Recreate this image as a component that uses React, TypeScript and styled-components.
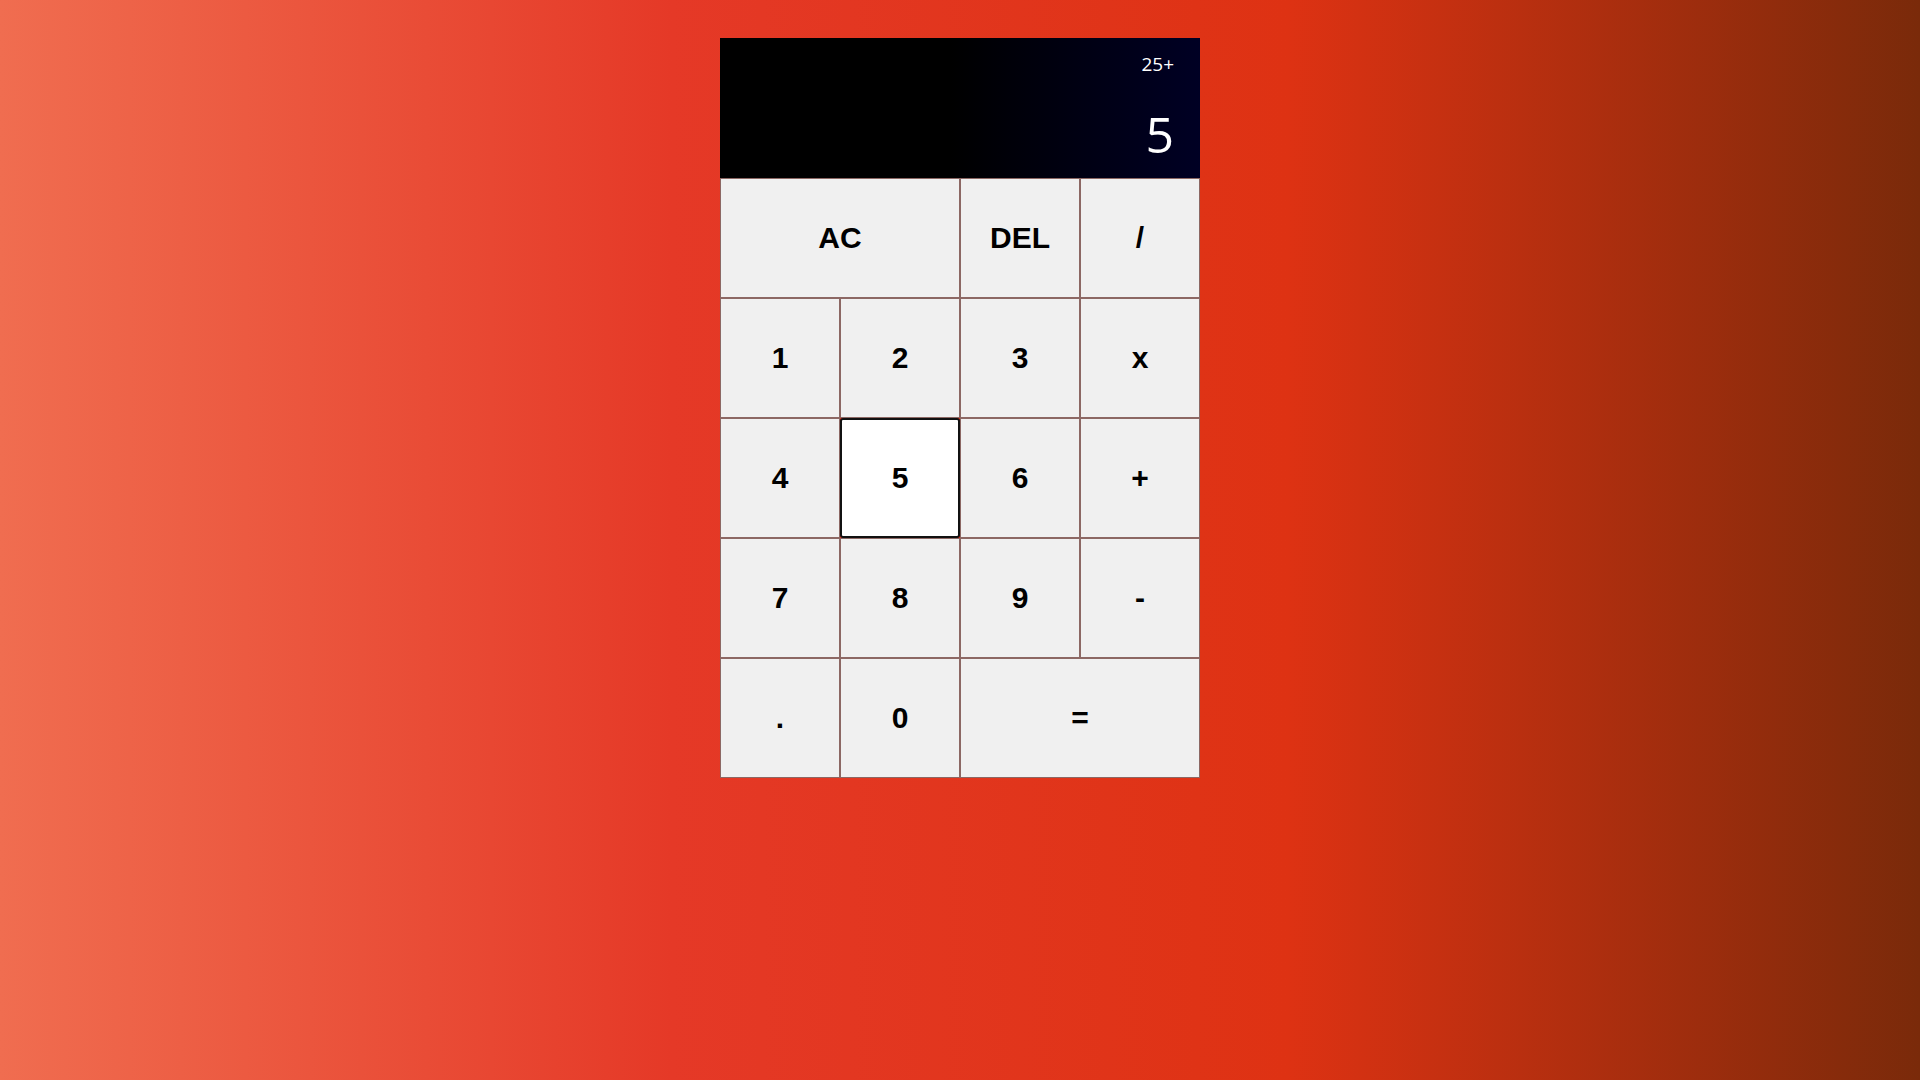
import React from "react";
import styled, { createGlobalStyle } from "styled-components";

const GlobalStyle = createGlobalStyle`
  *, *::before, *::after { box-sizing: border-box; }
  html, body { margin: 0; padding: 0; }
  body {
    min-height: 100vh;
    background: linear-gradient(to right, #f06d50 0%, #e53927 35%, #de3213 67%, #7a2a0a 100%);
    font-family: "Liberation Sans", Arial, sans-serif;
  }
`;

const Calculator = styled.div`
  display: grid;
  justify-content: center;
  grid-template-columns: repeat(4, 120px);
  grid-template-rows: 140px repeat(5, 120px);
  padding-top: 38px;
`;

const Display = styled.div`
  grid-column: 1 / -1;
  background: linear-gradient(to right, #000 48%, #000024 100%);
  display: flex;
  flex-direction: column;
  align-items: flex-end;
  justify-content: space-between;
  padding: 13px 26px 14px 24px;
  font-family: "Open Sans", "Noto Sans", sans-serif;
  color: #fff;
`;

const Previous = styled.div`
  font-size: 19px;
  line-height: 26px;
`;

const Current = styled.div`
  font-size: 50px;
  line-height: 60px;
`;

const Key = styled.button<{ $span?: number; $active?: boolean }>`
  grid-column: span ${(p) => p.$span ?? 1};
  margin: 0;
  padding: 0;
  font-family: "Liberation Sans", Arial, sans-serif;
  font-weight: bold;
  font-size: 30px;
  color: #000;
  cursor: pointer;
  background: ${(p) => (p.$active ? "#fff" : "#f0f0f0")};
  border: ${(p) => (p.$active ? "2px solid #111" : "1px solid #8c6864")};
  border-radius: ${(p) => (p.$active ? "3px" : "0")};
  outline: none;
`;

export default function App() {
  const keys: { label: string; span?: number; active?: boolean }[] = [
    { label: "AC", span: 2 },
    { label: "DEL" },
    { label: "/" },
    { label: "1" },
    { label: "2" },
    { label: "3" },
    { label: "x" },
    { label: "4" },
    { label: "5", active: true },
    { label: "6" },
    { label: "+" },
    { label: "7" },
    { label: "8" },
    { label: "9" },
    { label: "-" },
    { label: "." },
    { label: "0" },
    { label: "=", span: 2 },
  ];
  return (
    <>
      <GlobalStyle />
      <Calculator>
        <Display>
          <Previous>25+</Previous>
          <Current>5</Current>
        </Display>
        {keys.map((k) => (
          <Key key={k.label} $span={k.span} $active={k.active}>
            {k.label}
          </Key>
        ))}
      </Calculator>
    </>
  );
}
